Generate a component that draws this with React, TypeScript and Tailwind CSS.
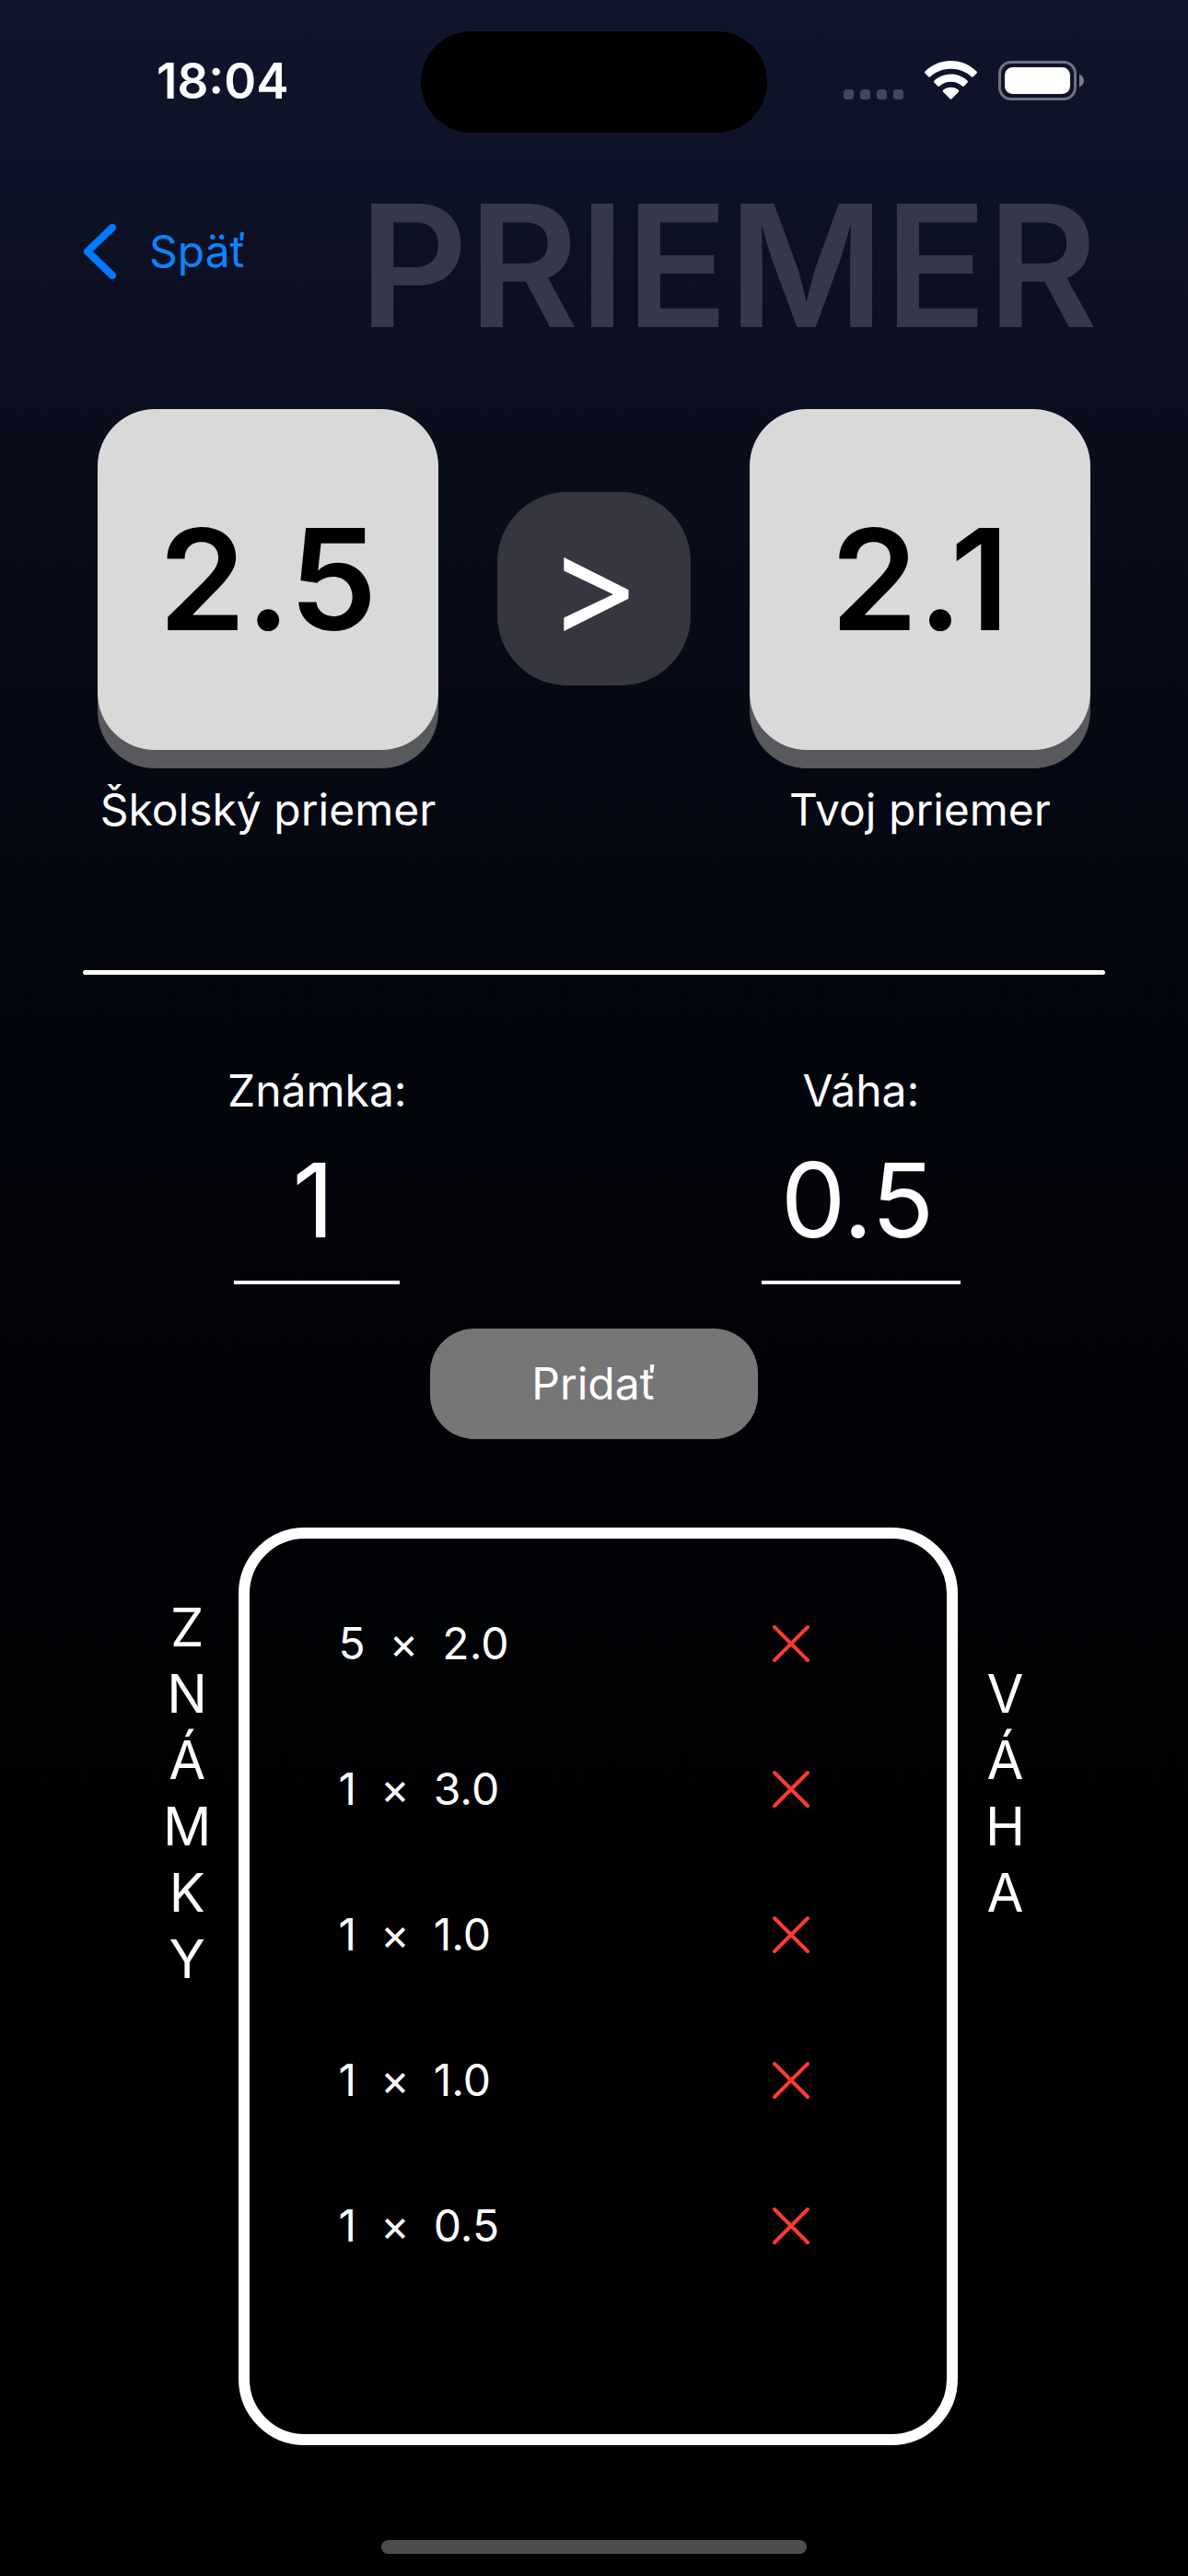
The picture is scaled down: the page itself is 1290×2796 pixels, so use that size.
import { useState } from "react";

const initialGrades = [
  { id: 1, grade: "5", weight: "2.0" },
  { id: 2, grade: "1", weight: "3.0" },
  { id: 3, grade: "1", weight: "1.0" },
  { id: 4, grade: "1", weight: "1.0" },
  { id: 5, grade: "1", weight: "0.5" },
];

function StatusBar() {
  return (
    <div className="grid grid-cols-[1fr_376px_1fr] items-center pt-[34px]">
      <span className="pb-[2px] pl-[170px] text-[53px] leading-[60px] font-semibold">
        18:04
      </span>
      <div className="h-[110px] rounded-full bg-black" />
      <div className="flex items-center justify-end pr-[112px] pb-[2px]">
        <svg width="262" height="44" viewBox="0 0 262 44" aria-hidden="true">
          {/* No signal dots */}
          <g fill="#fff" fillOpacity="0.22">
            <rect x="0" y="31" width="11" height="11" rx="3.5" />
            <rect x="18" y="31" width="11" height="11" rx="3.5" />
            <rect x="36" y="31" width="11" height="11" rx="3.5" />
            <rect x="54" y="31" width="11" height="11" rx="3.5" />
          </g>
          {/* Wifi */}
          <g fill="#fff">
            <path d="M116.500 0C105.500 0 95.600 4.400 88.500 11.500Q87.600 12.500 88.500 13.500L92.200 17.300Q93.200 18.200 94.200 17.300C100 11.800 107.900 8.800 116.500 8.800S133 11.800 138.800 17.300Q139.800 18.200 140.800 17.300L144.500 13.500Q145.400 12.500 144.500 11.500C137.400 4.400 127.500 0 116.500 0Z" />
            <path d="M116.500 14.500C109.500 14.500 103.100 17.200 98.400 21.700Q97.500 22.700 98.400 23.600L102.200 27.400Q103.200 28.300 104.200 27.400C107.400 24.500 111.700 22.800 116.500 22.800S125.600 24.500 128.800 27.400Q129.800 28.300 130.800 27.400L134.600 23.600Q135.500 22.700 134.600 21.700C129.900 17.200 123.500 14.500 116.500 14.500Z" />
            <path d="M116.500 28.700C113.300 28.700 110.400 29.800 108.100 31.700Q107.200 32.700 108.100 33.700L115.500 41.300Q116.500 42.200 117.500 41.300L124.900 33.700Q125.800 32.700 124.900 31.700C122.600 29.800 119.700 28.700 116.500 28.700Z" />
          </g>
          {/* Battery */}
          <rect x="169.500" y="1.500" width="82" height="40" rx="12.500" fill="none" stroke="#fff" strokeOpacity="0.4" strokeWidth="3" />
          <rect x="175" y="7" width="71" height="29" rx="8.500" fill="#fff" />
          <path d="M256 14.500C259 15.700 261 18.400 261 21.500S259 27.300 256 28.500Z" fill="#fff" fillOpacity="0.45" />
        </svg>
      </div>
    </div>
  );
}

function AverageCard({ value, label }: { value: string; label: string }) {
  return (
    <div className="flex w-[370px] flex-col items-center">
      <div className="flex h-[370px] w-full items-center justify-center rounded-[62px] bg-[#d9d9d9] text-[152px] font-semibold text-black shadow-[0_20px_0_#58595c]">
        {value}
      </div>
      <p className="mt-[35px] whitespace-nowrap">{label}</p>
    </div>
  );
}

function SideLabel({ text }: { text: string }) {
  return (
    <div className="flex flex-col items-center text-[58px] leading-[72px]">
      {text.split("").map((letter, i) => (
        <span key={i}>{letter}</span>
      ))}
    </div>
  );
}

export default function App() {
  const [grades, setGrades] = useState(initialGrades);
  const [grade, setGrade] = useState("1");
  const [weight, setWeight] = useState("0.5");

  const addGrade = () => {
    setGrades([...grades, { id: Date.now(), grade, weight }]);
  };

  return (
    <div className="flex min-h-screen flex-col bg-[linear-gradient(180deg,#10152c_0%,#0b0e1e_15%,#04060f_36%,#010205_60%,#000_80%)] font-[Inter,sans-serif] text-[48px] leading-[60px] text-white">
      <StatusBar />

      <header className="mt-[54px] flex items-start justify-between pr-[98px] pl-[90px]">
        <a href="#" className="mt-[45px] flex items-center gap-[34px] text-[#0a84ff]">
          <svg width="38" height="60" viewBox="0 0 38 60" fill="none" stroke="#007aff" strokeWidth="8" strokeLinecap="round" strokeLinejoin="round" aria-hidden="true">
            <path d="M32 4L5 30L32 56" />
          </svg>
          Späť
        </a>
        <h1 className="text-[184px] leading-[180px] font-semibold text-[#35374a]">
          PRIEMER
        </h1>
      </header>

      <section className="mt-[66px] flex items-start justify-between px-[106px]">
        <AverageCard value="2.5" label="Školský priemer" />
        <div className="mt-[90px] flex h-[210px] w-[210px] items-center justify-center rounded-[76px] bg-[#363640] pb-3 text-[152px]">
          &gt;
        </div>
        <AverageCard value="2.1" label="Tvoj priemer" />
      </section>

      <hr className="mx-[90px] mt-36 h-[5px] rounded-full border-0 bg-white" />

      <form
        className="flex flex-col items-center"
        onSubmit={(e) => {
          e.preventDefault();
          addGrade();
        }}
      >
        <div className="mt-24 flex w-full justify-between px-[247px]">
          <div className="flex flex-col items-center">
            <label htmlFor="grade">Známka:</label>
            <input
              id="grade"
              value={grade}
              onChange={(e) => setGrade(e.target.value)}
              className="mt-7 h-[152px] w-[180px] border-b-4 border-white pr-2 pb-7 text-center text-[112px] outline-none"
            />
          </div>
          <div className="flex flex-col items-center">
            <label htmlFor="weight">Váha:</label>
            <input
              id="weight"
              value={weight}
              onChange={(e) => setWeight(e.target.value)}
              className="mt-7 h-[152px] w-[216px] border-b-4 border-white pr-2 pb-7 text-center text-[112px] outline-none"
            />
          </div>
        </div>
        <button
          type="submit"
          className="mt-12 h-[120px] w-[356px] rounded-[48px] bg-[#767676]"
        >
          Pridať
        </button>
      </form>

      <section className="mt-24 flex items-start gap-[30px] px-[177px]">
        <div className="mt-[72px]">
          <SideLabel text="ZNÁMKY" />
        </div>
        <ul className="min-h-[996px] flex-1 rounded-[72px] border-12 border-white pt-[35px] pr-[148px] pl-[96px]">
          {grades.map((item) => (
            <li key={item.id} className="flex h-[158px] items-center justify-between">
              <span className="flex gap-[26px]">
                <span>{item.grade}</span>
                <span>×</span>
                <span>{item.weight}</span>
              </span>
              <button
                type="button"
                aria-label="Odstrániť"
                onClick={() => setGrades(grades.filter((g) => g.id !== item.id))}
              >
                <svg width="42" height="42" viewBox="0 0 42 42" stroke="#ff3b30" strokeWidth="4" strokeLinecap="round" aria-hidden="true">
                  <path d="M3 3L39 39M39 3L3 39" />
                </svg>
              </button>
            </li>
          ))}
        </ul>
        <div className="mt-36">
          <SideLabel text="VÁHA" />
        </div>
      </section>

      <div className="mt-auto flex justify-center pt-12 pb-6">
        <div className="h-[15px] w-[462px] rounded-full bg-[#4d4d4d]" />
      </div>
    </div>
  );
}
